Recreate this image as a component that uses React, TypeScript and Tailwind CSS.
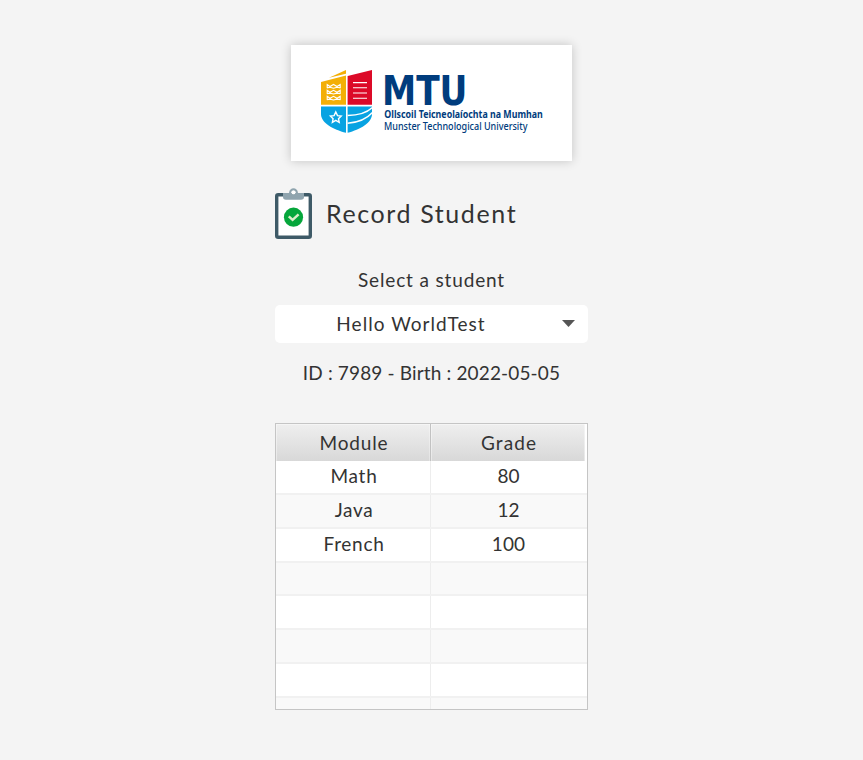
const rows = [
  { h: 'h-[34px]', module: 'Math', grade: '80' },
  { h: 'h-[34px]', module: 'Java', grade: '12' },
  { h: 'h-[34px]', module: 'French', grade: '100' },
  { h: 'h-[33px]', module: '', grade: '' },
  { h: 'h-[34px]', module: '', grade: '' },
  { h: 'h-[34px]', module: '', grade: '' },
  { h: 'h-[34px]', module: '', grade: '' },
];

function Logo() {
  return (
    <svg width="281" height="116" viewBox="291 45 281 116" role="img">
      <path fill="#f3af06" d="M321 82 L346 75.5 V104.8 H321Z" />
      <path fill="#f3af06" d="M329 77.8 L346 70 V73.8Z" />
      <path fill="#dc0a28" d="M347.6 76 L372 70 V104.8 H347.6Z" />
      <path fill="#08a3e2" d="M321 106.6 H346 V132.8 C333 129.5 321 123 321 114Z" />
      <path fill="#08a3e2" d="M347.6 106.6 H372 V114 C372 123 360 129.5 347.6 132.8Z" />
      <g fill="none" stroke="#fff" strokeWidth="1.1">
        <path d="M327.2 88 V84.5 L330 86.5 L333.5 84.5 L337 86.5 L340.2 84.5 V88 M326.8 88 L330 87.3 L333.5 88.2 L337 87.3 L340.6 88" />
        <path d="M327.2 93.8 V90.3 L330 92.3 L333.5 90.3 L337 92.3 L340.2 90.3 V93.8 M326.8 93.8 L330 93.1 L333.5 94 L337 93.1 L340.6 93.8" />
        <path d="M327.2 99.8 V96.3 L330 98.3 L333.5 96.3 L337 98.3 L340.2 96.3 V99.8 M326.8 99.8 L330 99.1 L333.5 100 L337 99.1 L340.6 99.8" />
        <path d="M353 82.6 H367 M353 87.8 H367 M353 93 H367 M353 98.3 H367" />
        <path strokeWidth="1.4" d="M335.8 112 L337.5 115.6 L341.2 116.1 L338.5 118.7 L339.2 122.3 L335.8 120.4 L332.4 122.3 L333.1 118.7 L330.4 116.1 L334.1 115.6Z" />
        <path strokeWidth="1.5" d="M347.6 115.4 C358 115.4 367 112.5 372.5 107.5 M347.6 123.3 C358 122.5 367 118.5 372.5 112.5" />
      </g>
      <g fill="#003c7d">
        <text x="382" y="104.5" fontSize="41" fontWeight="700" textLength="85.5" lengthAdjust="spacingAndGlyphs" fontFamily="'DejaVu Sans', sans-serif">MTU</text>
        <text x="384.3" y="118.2" fontSize="9.8" fontWeight="700" textLength="158.5" lengthAdjust="spacingAndGlyphs" fontFamily="'Noto Sans', sans-serif">Ollscoil Teicneolaíochta na Mumhan</text>
        <text x="384" y="130.2" fontSize="9.8" fontWeight="500" textLength="143.5" lengthAdjust="spacingAndGlyphs" fontFamily="'Noto Sans', sans-serif">Munster Technological University</text>
      </g>
    </svg>
  );
}

function Clipboard() {
  return (
    <svg width="37" height="52" viewBox="0 0 37 52">
      <rect x="1.7" y="6.7" width="33.6" height="42.6" rx="1.5" fill="#fff" stroke="#3e5a67" strokeWidth="3.4" />
      <path fill="#8fa4ae" fillRule="evenodd" d="M8 5 H14 C14.5 -1.2 22.5 -1.2 23 5 H29 V9 Q29 11.7 26 11.7 H11 Q8 11.7 8 9Z M18.5 2.4 A2.1 2.1 0 1 0 18.5 6.6 A2.1 2.1 0 1 0 18.5 2.4Z" />
      <circle cx="18.5" cy="4.5" r="2.1" fill="#fff" />
      <circle cx="18.5" cy="29.2" r="9.6" fill="#05a63b" />
      <path d="M13.8 28.3 L17.6 31.8 L23.6 26.3" fill="none" stroke="#dcedc8" strokeWidth="2.5" />
    </svg>
  );
}

export default function App() {
  return (
    <main className="flex h-[760px] w-full flex-col items-center bg-[#f4f4f4] pt-[45px] font-[Lato,sans-serif] text-[19px] leading-6 text-[#333]">
      <div className="h-[116px] w-[281px] bg-white shadow-[0_0_10px_rgba(0,0,0,0.2)]">
        <Logo />
      </div>
      <section className="flex w-[313px] flex-col">
        <div className="mt-[27px] flex h-[52px] items-center">
          <Clipboard />
          <h1 className="-mt-0.5 ml-[14px] whitespace-nowrap text-[25px] leading-8 tracking-[1.6px]">Record Student</h1>
        </div>
        <p className="mt-[28px] text-center tracking-[0.85px]">Select a student</p>
        <button className="mt-[13px] flex h-[38px] items-center rounded-[5px] bg-white">
          <span className="w-[272px] text-center tracking-[1.03px]">Hello WorldTest</span>
          <svg className="ml-[15px]" width="14" height="8" viewBox="0 0 14 8"><path d="M0 0H13L6.5 7Z" fill="#555" /></svg>
        </button>
        <p className="mt-[18px] whitespace-nowrap text-center tracking-[0.15px]">ID : 7989 - Birth : 2022-05-05</p>
        <div className="mt-[38px] flex h-[287px] flex-col overflow-hidden border border-[#c5c5c5] bg-white">
          <div className="flex h-[37px] shrink-0 pr-px">
            <div className="flex w-[155px] items-center justify-center border-r border-[#c2c2c2] bg-linear-to-b from-[#efefef] to-[#d8d8d8] pl-[2px] pt-px tracking-[0.85px] shadow-[inset_1px_1px_0_rgba(255,255,255,0.4),inset_-1px_0_0_rgba(255,255,255,0.3)]">Module</div>
            <div className="mr-px flex flex-1 items-center justify-center bg-linear-to-b from-[#efefef] to-[#d8d8d8] pl-[2px] pt-px tracking-[1.1px] shadow-[inset_1px_1px_0_rgba(255,255,255,0.4),inset_-1px_0_0_rgba(255,255,255,0.4)]">Grade</div>
          </div>
          {rows.map((row, i) => (
            <div key={i} className={`flex shrink-0 border-b-2 border-[#f1f1f1] ${row.h} ${i % 2 ? 'bg-[#f9f9f9]' : 'bg-white'}`}>
              <div className="flex w-[155px] items-center justify-center border-r border-[#ededed] pb-0.5 pl-[2px] tracking-[0.7px]">{row.module}</div>
              <div className="flex flex-1 items-center justify-center pb-0.5 pr-px tracking-[0.1px]">{row.grade}</div>
            </div>
          ))}
          <div className="flex flex-1 bg-[#f9f9f9]"><div className="w-[155px] border-r border-[#ededed]" /></div>
        </div>
      </section>
    </main>
  );
}
